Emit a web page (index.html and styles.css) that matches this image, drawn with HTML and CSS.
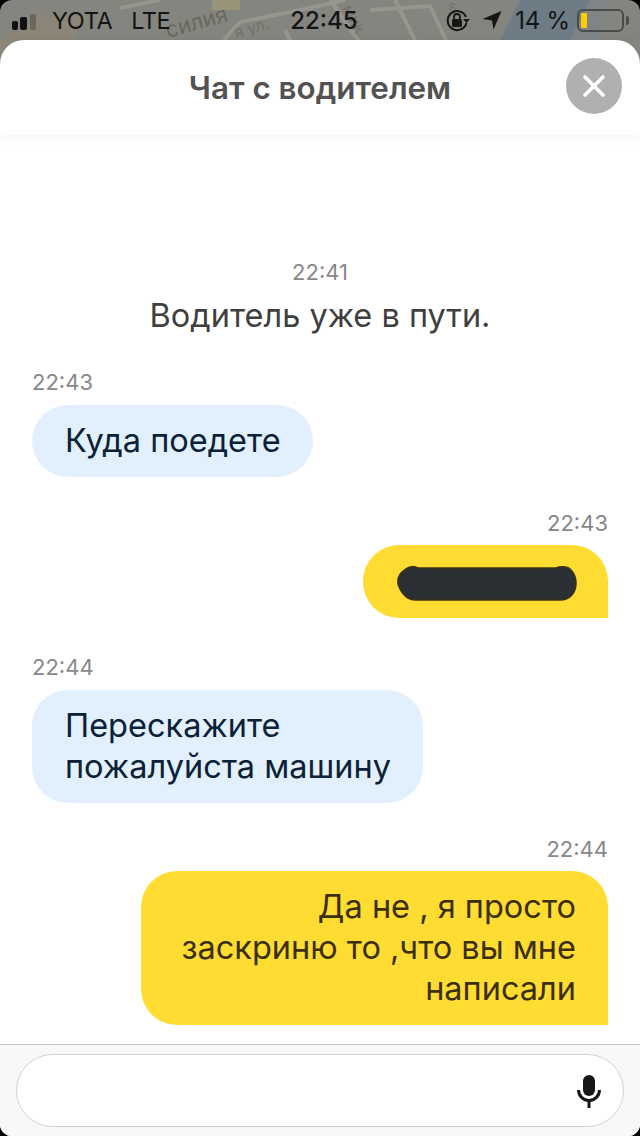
FILE: index.html
```html
<!DOCTYPE html>
<html lang="ru">
<head>
  <meta charset="UTF-8" />
  <meta name="viewport" content="width=device-width, initial-scale=1.0"/>
  <title>Чат с водителем</title>
  <link rel="stylesheet" href="styles.css">
</head>
<body>

<div class="phone">
  <!-- dimmed map behind the status bar -->
  <svg class="map" width="640" height="60" viewBox="0 0 640 60">
    <polygon points="0,40 40,18 90,14 60,60 0,60" fill="#8f8672" opacity="0.55"/>
    <polygon points="560,60 590,0 520,0 490,60" fill="#6e7c85"/>
    <polygon points="560,60 590,0 612,0 590,60" fill="#7f8586"/>
    <g stroke="#96968f" stroke-width="4" fill="none">
      <path d="M224 40 L240 22 L300 10 L345 0"/>
      <path d="M285 30 L300 60"/>
      <path d="M330 0 L372 60"/>
      <path d="M370 10 L430 6 L446 40"/>
      <path d="M395 0 L420 50"/>
      <path d="M120 8 L160 0"/>
    </g>
    <rect x="212" y="0" width="28" height="10" fill="#a49f74" opacity="0.6"/>
    <text class="map-label" transform="translate(168 38) rotate(-16)">силия</text>
    <text class="map-label-small" transform="translate(236 38) rotate(-16)">я ул.</text>
    <text class="map-label-small" transform="translate(342 8) rotate(62)">мик</text>
    <text class="map-label-tiny" transform="translate(453 16) rotate(-70)">ул</text>
  </svg>

  <div class="status">
    <div class="status-left">
      <svg class="signal" width="34" height="22" viewBox="0 0 34 22">
        <rect x="0" y="12" width="6" height="9" rx="2" fill="#111"/>
        <rect x="8" y="8" width="7" height="13" rx="2" fill="#111"/>
        <rect x="18" y="5" width="6" height="16" rx="2" fill="#6d675c"/>
        <rect x="26" y="0" width="6" height="21" rx="2" fill="#8b8577"/>
      </svg>
      <span class="carrier">YOTA</span>
      <span class="carrier">LTE</span>
    </div>
    <div class="clock">22:45</div>
    <div class="status-right">
      <svg width="26" height="24" viewBox="0 0 26 24">
        <path d="M21 9 A9.5 9.5 0 1 0 21.4 15" fill="none" stroke="#161616" stroke-width="2"/>
        <path d="M18 11 L25 11 L21.500 15 Z" fill="#161616"/>
        <rect x="7" y="11" width="10" height="8" rx="1.500" fill="#161616"/>
        <path d="M9 11 V9 A3 3 0 0 1 15 9 V11" fill="none" stroke="#161616" stroke-width="1.800"/>
      </svg>
      <svg class="location" width="20" height="20" viewBox="0 0 20 20">
        <path d="M19.500 1 L0.500 9 L10 10.500 L11.500 19.500 Z" fill="#161616"/>
      </svg>
      <span class="battery-pct">14 %</span>
      <div class="battery"><div class="battery-level"></div></div>
    </div>
  </div>

  <div class="sheet">
    <div class="sheet-head">
      <div class="title">Чат с водителем</div>
      <div class="close">
        <svg width="24" height="24" viewBox="0 0 24 24">
          <path d="M3 3 L21 21 M21 3 L3 21" stroke="#fff" stroke-width="3.600" stroke-linecap="round"/>
        </svg>
      </div>
    </div>

    <div class="chat">
      <div class="system">
        <div class="time">22:41</div>
        <div class="system-text">Водитель уже в пути.</div>
      </div>

      <div class="msg">
        <div class="time">22:43</div>
        <div class="bubble">Куда поедете</div>
      </div>

      <div class="msg mine">
        <div class="time">22:43</div>
        <div class="bubble bubble-redacted">
          <svg class="scribble" width="178" height="34" viewBox="0 0 178 34">
            <path d="M8 2 C11 -1 17 -1 20 1 H158 C162 -1 170 -1 173 3 C176 6 178 10 178 16 C178 26 172 33 162 33 H18 C9 33 3 26 0 17 C-1 10 3 5 8 2 Z" fill="#2b2f33" stroke="#3d3210" stroke-width="1.500"/>
          </svg>
        </div>
      </div>

      <div class="msg">
        <div class="time">22:44</div>
        <div class="bubble">Перескажите<br>пожалуйста машину</div>
      </div>

      <div class="msg mine">
        <div class="time">22:44</div>
        <div class="bubble bubble-wide">Да не , я просто заскриню то ,что вы мне написали</div>
      </div>
    </div>

    <div class="composer">
      <div class="input">
        <svg width="24" height="34" viewBox="0 0 24 34">
          <rect x="6" y="0" width="12" height="21" rx="6" fill="#161616"/>
          <path d="M1.500 15 A10.500 10.500 0 0 0 22.500 15" fill="none" stroke="#161616" stroke-width="3"/>
          <rect x="10.500" y="25" width="3" height="8" fill="#161616"/>
        </svg>
      </div>
    </div>
  </div>
</div>

</body>
</html>
```

FILE: styles.css
```css
* {
  box-sizing: border-box;
}
body {
  margin: 0;
  background: #000;
  font-family: Inter, "Noto Sans", sans-serif;
}
.phone {
  position: relative;
  width: 640px;
  height: 1136px;
  background: #85857f;
  border-radius: 12px;
  overflow: hidden;
  display: flex;
  flex-direction: column;
}
.map {
  position: absolute;
  top: 0;
  left: 0;
}
.map-label {
  font-size: 22px;
  fill: #686861;
}
.map-label-small {
  font-size: 16px;
  fill: #72726b;
}
.map-label-tiny {
  font-size: 12px;
  fill: #72726b;
}

/* status bar */
.status {
  position: relative;
  height: 40px;
  flex: none;
  display: grid;
  grid-template-columns: 1fr auto 1fr;
  align-items: center;
  padding: 0 11px 0 12px;
  color: #141414;
}
.status-left {
  display: flex;
  align-items: center;
  gap: 19px;
}
.signal {
  margin-right: -13px;
}
.carrier {
  font-size: 23.5px;
  letter-spacing: -0.4px;
}
.clock {
  margin-left: 7px;
  font-size: 24px;
  font-weight: 500;
}
.status-right {
  display: flex;
  align-items: center;
  justify-content: flex-end;
  gap: 13px;
}
.location {
  margin-left: -2px;
}
.battery-pct {
  font-size: 24px;
  letter-spacing: -0.2px;
  margin-right: -6px;
}
.battery {
  position: relative;
  width: 47px;
  height: 23px;
  border: 2px solid #4b4b47;
  border-radius: 6px;
  padding: 2px;
  margin-right: 5px;
}
.battery::after {
  content: "";
  position: absolute;
  right: -7px;
  top: 5px;
  width: 3px;
  height: 9px;
  background: #4b4b47;
  border-radius: 0 3px 3px 0;
}
.battery-level {
  width: 6px;
  height: 100%;
  background: #ffcc00;
  border-radius: 1px;
}

/* sheet */
.sheet {
  position: relative;
  flex: 1;
  min-height: 0;
  background: #fff;
  border-radius: 24px 24px 0 0;
  display: flex;
  flex-direction: column;
}
.sheet-head {
  height: 95px;
  flex: none;
  display: grid;
  grid-template-columns: 1fr auto 1fr;
  align-items: center;
  padding: 0 18px;
  box-shadow: 0 2px 12px rgba(0, 0, 0, 0.05);
}
.title {
  grid-column: 2;
  font-size: 31.4px;
  font-weight: 600;
  color: #525252;
}
.close {
  grid-column: 3;
  justify-self: end;
  width: 56px;
  height: 56px;
  margin-bottom: 4px;
  border-radius: 50%;
  background: #b0b0b0;
  display: flex;
  align-items: center;
  justify-content: center;
}

/* messages */
.chat {
  flex: 1;
  min-height: 0;
  overflow: hidden;
  padding: 123px 32px 0;
  display: flex;
  flex-direction: column;
  gap: 32px;
}
.time {
  font-size: 22px;
  line-height: 28px;
  color: #888;
}
.system {
  display: flex;
  flex-direction: column;
  align-items: center;
  gap: 9px;
}
.system-text {
  font-size: 32.5px;
  line-height: 41px;
  color: #3f3f3f;
}
.msg {
  display: flex;
  flex-direction: column;
  align-items: flex-start;
  gap: 9px;
}
.msg.mine {
  align-items: flex-end;
  gap: 8px;
}
.bubble {
  padding: 15px 32px 16px 33px;
  font-size: 32.5px;
  line-height: 41px;
  color: #0b2138;
  background: #e2effd;
  border-radius: 36px;
}
.mine .bubble {
  padding: 15px 32px 16px;
  color: #3a2f0a;
  background: #ffdc32;
  text-align: right;
  border-bottom-right-radius: 0;
}
.mine .bubble-wide {
  width: 467px;
}
.mine .bubble-redacted {
  padding: 22px 32px 17px 35px;
  margin-bottom: 3px;
}
.scribble {
  display: block;
  overflow: visible;
}

/* input */
.composer {
  flex: none;
  height: 92px;
  padding: 9px 16px;
  background: #f8f8f8;
  border-top: 1px solid #c4c4c4;
}
.input {
  height: 73px;
  background: #fff;
  border: 1px solid #cfcfcf;
  border-radius: 37px;
  display: flex;
  align-items: center;
  justify-content: flex-end;
  padding: 3px 22px 0 0;
}
```
